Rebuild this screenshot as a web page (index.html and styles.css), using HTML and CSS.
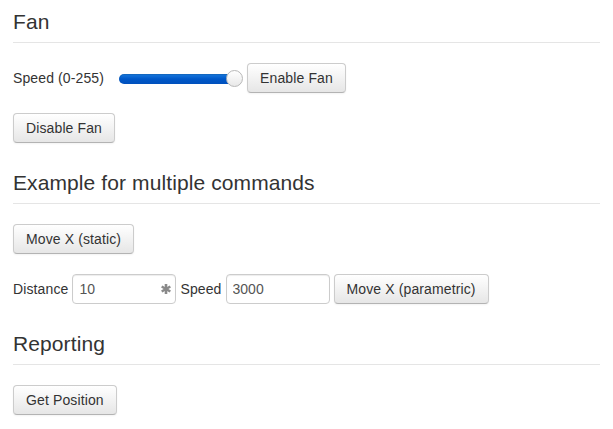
FILE: index.html
```html
<!DOCTYPE html>
<html>
<head>
<meta charset="utf-8">
<link rel="stylesheet" href="styles.css">
</head>
<body>
<div class="page">
  <div class="legend">Fan</div>
  <div class="row">
    <span class="label">Speed (0-255)</span>
    <span class="slider"><span class="track"></span><span class="thumb"></span></span>
    <button class="btn">Enable Fan</button>
  </div>
  <div class="row">
    <button class="btn">Disable Fan</button>
  </div>

  <div class="legend">Example for multiple commands</div>
  <div class="row">
    <button class="btn">Move X (static)</button>
  </div>
  <div class="row">
    <span class="label">Distance</span>
    <span class="field">
      <input class="input" type="text" value="10">
      <svg class="req" width="10" height="10" viewBox="0 0 10 10"><g stroke="#8a8a8a" stroke-width="2.6"><line x1="5" y1="0" x2="5" y2="10"/><line x1="0.7" y1="2.5" x2="9.3" y2="7.5"/><line x1="0.7" y1="7.5" x2="9.3" y2="2.5"/></g></svg>
    </span>
    <span class="label">Speed</span>
    <span class="field"><input class="input" type="text" value="3000"></span>
    <button class="btn">Move X (parametric)</button>
  </div>

  <div class="legend">Reporting</div>
  <div class="row">
    <button class="btn">Get Position</button>
  </div>
</div>
</body>
</html>
```
FILE: styles.css
```css
html, body {
  margin: 0;
  padding: 0;
  background: #fff;
}
.page {
  padding: 2px 13px 0 13px;
  font-family: "Liberation Sans", Arial, sans-serif;
  font-size: 14px;
  line-height: 20px;
  color: #333;
  letter-spacing: 0.12px;
}
.legend {
  font-size: 21px;
  line-height: 40px;
  color: #333;
  border-bottom: 1px solid #e5e5e5;
  margin-bottom: 20px;
  letter-spacing: 0.1px;
}
.row {
  display: flex;
  align-items: center;
  height: 30px;
  margin-bottom: 20px;
  gap: 4px;
}
.label {
  color: #333;
}
.slider {
  position: relative;
  width: 124px;
  height: 17px;
  margin-left: 11px;
  display: inline-block;
}
.track {
  position: absolute;
  left: 0;
  right: 8px;
  top: 4px;
  height: 10px;
  border-radius: 5px;
  background: linear-gradient(to bottom, #1a7be0 0%, #0058c8 50%, #0050bd 100%);
  box-shadow: inset 0 1px 1px rgba(0,0,0,0.15);
}
.thumb {
  position: absolute;
  right: 0;
  top: 0;
  width: 15px;
  height: 15px;
  border-radius: 50%;
  border: 1px solid #b8b8b8;
  background: linear-gradient(to bottom, #ffffff, #e8e8e8);
}
.btn {
  font-family: "Liberation Sans", Arial, sans-serif;
  font-size: 14px;
  line-height: 20px;
  letter-spacing: 0.12px;
  color: #333;
  padding: 4px 12px;
  height: 30px;
  border: 1px solid #cccccc;
  border-bottom-color: #b3b3b3;
  border-radius: 4px;
  background: linear-gradient(to bottom, #ffffff, #e6e6e6);
  box-shadow: inset 0 1px 0 rgba(255,255,255,0.2), 0 1px 2px rgba(0,0,0,0.05);
  margin: 0;
  cursor: pointer;
}
.field {
  position: relative;
  display: inline-block;
  height: 30px;
}
.input {
  box-sizing: border-box;
  width: 104px;
  height: 30px;
  padding: 4px 6px;
  margin: 0;
  font-family: "Liberation Sans", Arial, sans-serif;
  font-size: 14px;
  line-height: 20px;
  color: #555;
  border: 1px solid #cccccc;
  border-radius: 4px;
  box-shadow: inset 0 1px 1px rgba(0,0,0,0.075);
  background: #fff;
}
.req {
  position: absolute;
  right: 5px;
  top: 10px;
}
```
